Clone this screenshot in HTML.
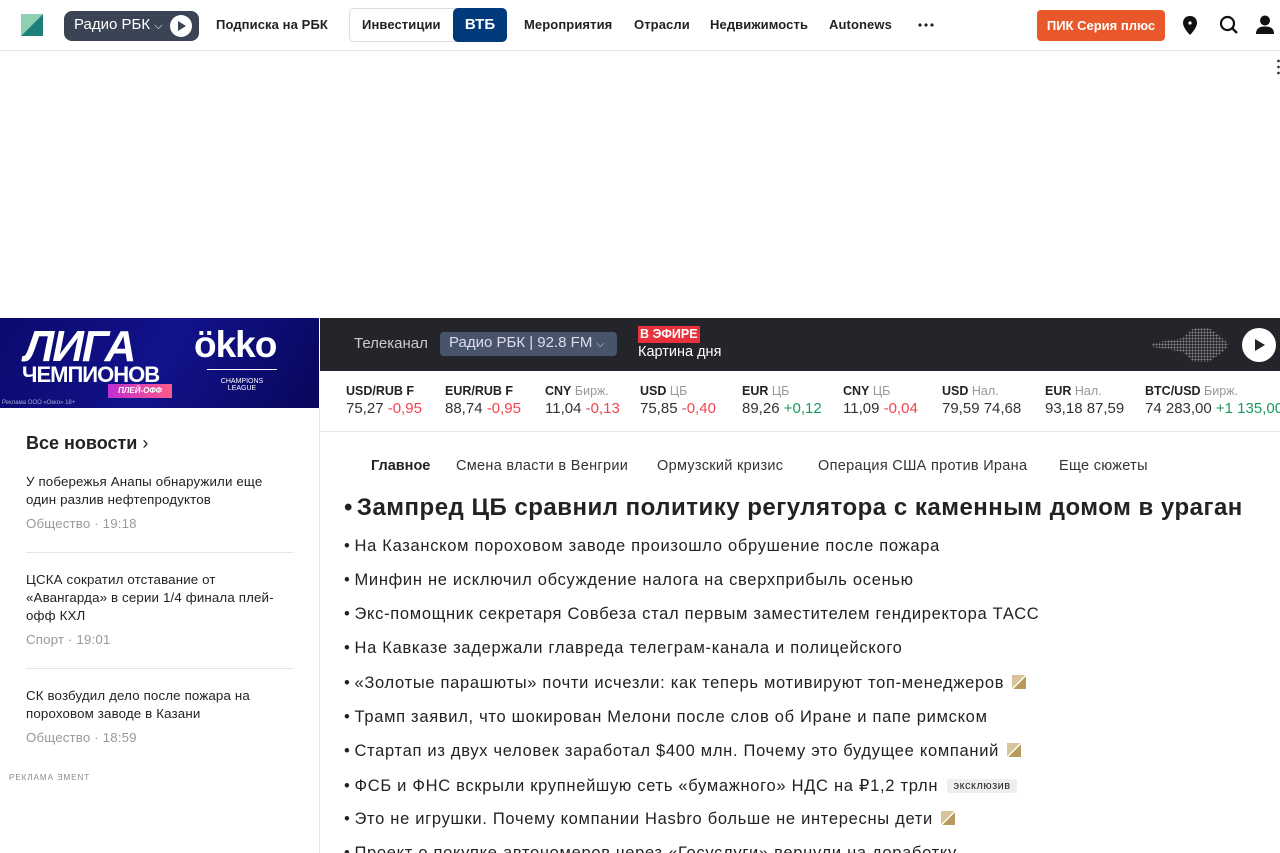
<!DOCTYPE html>
<html style="overflow:hidden;height:853px"><head><meta charset="utf-8"><style>
*{margin:0;padding:0;box-sizing:border-box}
body{width:1280px;height:853px;overflow:hidden;background:#fff;font-family:"Liberation Sans","Noto Sans CJK SC",sans-serif;color:#222;position:relative}
.abs{position:absolute}
.nav a{position:absolute;top:17px;font-size:13px;font-weight:bold;color:#222;white-space:nowrap;letter-spacing:.1px}
.tk{position:absolute;top:383px;font-size:12.5px;line-height:17px;white-space:nowrap}
.tk b{color:#222}.tk span.g{color:#999}
.tk .v{font-size:15px;color:#333}
.r{color:#f0444f}.gr{color:#1a9a5c}
.news{position:absolute;left:26px;width:262px;font-size:13.3px;line-height:18px;color:#222;letter-spacing:.15px}
.news .m{color:#999;margin-top:6px}
.ln{position:absolute;left:344px;font-size:16.5px;color:#222;white-space:nowrap;letter-spacing:.7px}
.ln:before{content:"•";margin-right:4px}
.pb{display:inline-block;width:14px;height:14px;background:linear-gradient(135deg,#d8c49a 48%,#fff 48%,#fff 54%,#b89a5e 54%);vertical-align:-1px;margin-left:8px}
.tabs span{position:absolute;top:458px;font-size:14.5px;color:#333;white-space:nowrap;letter-spacing:.3px}
</style></head><body>
<svg class="abs" style="left:21px;top:14px" width="22" height="22"><polygon points="0,0 22,0 0,22" fill="#8fd0b4"/><polygon points="22,0 22,22 0,22" fill="#1f7f7a"/></svg>
<div class="abs" style="left:64px;top:11px;width:135px;height:30px;background:#3b4454;border-radius:8px;color:#fff;font-size:15px;padding:5px 0 0 10px">Радио РБК <span style="font-size:11px">⌵</span>
<div class="abs" style="left:106px;top:4px;width:22px;height:22px;border-radius:50%;background:#fff"><div class="abs" style="left:8px;top:6px;border-left:8px solid #3b4454;border-top:5px solid transparent;border-bottom:5px solid transparent"></div></div></div>
<div class="nav">
<a style="left:216px">Подписка на РБК</a>
<div class="abs" style="left:349px;top:8px;width:158px;height:34px;border:1px solid #ddd;border-radius:5px"></div>
<a style="left:362px">Инвестиции</a>
<div class="abs" style="left:453px;top:8px;width:54px;height:34px;background:#013a7a;border-radius:5px;color:#fff;font-weight:bold;font-size:15px;text-align:center;line-height:34px">ВТБ</div>
<a style="left:524px">Мероприятия</a><a style="left:634px">Отрасли</a><a style="left:710px">Недвижимость</a><a style="left:829px">Autonews</a>
</div>
<div class="abs" style="left:917px;top:23px;width:18px;height:4px;background:radial-gradient(circle,#222 1.5px,transparent 1.8px) 0 0/6px 4px"></div>
<div class="abs" style="left:1037px;top:10px;width:128px;height:31px;background:#e8582a;border-radius:4px;color:#fff;font-size:13px;font-weight:bold;text-align:center;line-height:31px">ПИК Серия плюс</div>
<svg class="abs" style="left:1182px;top:16px" width="16" height="20"><path d="M8 0C3.6 0 1 3 1 7c0 5 7 12 7 12s7-7 7-12c0-4-2.6-7-7-7z" fill="#111"/><circle cx="8" cy="7" r="1.6" fill="#fff"/></svg>
<svg class="abs" style="left:1219px;top:15px" width="20" height="20"><circle cx="8.5" cy="8.5" r="6.5" fill="none" stroke="#111" stroke-width="2.2"/><path d="M13 13l5 5" stroke="#111" stroke-width="2.4"/></svg>
<svg class="abs" style="left:1256px;top:15px" width="20" height="20"><circle cx="9" cy="5.5" r="5" fill="#111"/><path d="M0 19c0-6 4-7.5 9-7.5s9 1.5 9 7.5z" fill="#111"/></svg>
<div class="abs" style="left:0;top:50px;width:1280px;height:1px;background:#e5e5e5"></div>
<div class="abs" style="left:1277px;top:58px;width:3px;height:18px;background:radial-gradient(circle,#333 1.2px,transparent 1.5px) 0 0/3px 6px"></div>
<div class="abs" style="left:0;top:318px;width:319px;height:90px;background:linear-gradient(120deg,#0a0a6e,#12128c 50%,#07075a);overflow:hidden">
<div class="abs" style="left:24px;top:4px;color:#fff;font-weight:900;font-size:44px;font-style:italic;letter-spacing:-2px">ЛИГА</div>
<div class="abs" style="left:22px;top:44px;color:#fff;font-weight:900;font-size:22px;letter-spacing:-1px">ЧЕМПИОНОВ</div>
<div class="abs" style="left:108px;top:66px;width:64px;height:14px;background:linear-gradient(90deg,#c02fd0,#ff5a8a);color:#fff;font-size:8px;font-weight:bold;text-align:center;line-height:14px;font-style:italic">ПЛЕЙ-ОФФ</div>
<div class="abs" style="left:194px;top:6px;color:#fff;font-size:37px;font-weight:bold;letter-spacing:-1px">ökko</div>
<div class="abs" style="left:207px;top:51px;width:70px;height:1px;background:#fff"></div>
<div class="abs" style="left:210px;top:60px;color:#fff;font-size:7px;text-align:center;width:64px">CHAMPIONS<br>LEAGUE</div>
<div class="abs" style="left:2px;top:82px;color:#aac;font-size:6px">Реклама ООО «Окко» 18+</div>
</div>
<div class="abs" style="left:320px;top:318px;width:960px;height:53px;background:#23252b"></div>
<div class="abs" style="left:354px;top:335px;color:#ccc;font-size:15px">Телеканал</div>
<div class="abs" style="left:440px;top:332px;width:177px;height:24px;background:#48546a;border-radius:4px;color:#dde;font-size:15px;padding:2px 0 0 9px;white-space:nowrap">Радио РБК | 92.8 FM <span style="font-size:10px">⌵</span></div>
<div class="abs" style="left:638px;top:326px;background:#e8313a;color:#fff;font-size:12.5px;font-weight:bold;padding:0 2px;line-height:17px">В ЭФИРЕ</div>
<div class="abs" style="left:638px;top:344px;color:#fff;font-size:14.5px">Картина дня</div>
<div class="abs" style="left:1152px;top:328px;width:76px;height:34px;background:radial-gradient(circle,#888 0.9px,transparent 1.1px) 0 0/3px 3px;clip-path:polygon(0 45%,40% 30%,55% 0,75% 0,90% 25%,100% 45%,100% 55%,90% 75%,75% 100%,55% 100%,40% 70%,0 55%)"></div>
<div class="abs" style="left:1242px;top:328px;width:34px;height:34px;border-radius:50%;background:#fff"><div class="abs" style="left:13px;top:11px;border-left:10px solid #23252b;border-top:6px solid transparent;border-bottom:6px solid transparent"></div></div>
<div class="tk" style="left:346px"><b>USD/RUB F</b><br><span class="v">75,27 <span class="r">-0,95</span></span></div>
<div class="tk" style="left:445px"><b>EUR/RUB F</b><br><span class="v">88,74 <span class="r">-0,95</span></span></div>
<div class="tk" style="left:545px"><b>CNY</b> <span class="g">Бирж.</span><br><span class="v">11,04 <span class="r">-0,13</span></span></div>
<div class="tk" style="left:640px"><b>USD</b> <span class="g">ЦБ</span><br><span class="v">75,85 <span class="r">-0,40</span></span></div>
<div class="tk" style="left:742px"><b>EUR</b> <span class="g">ЦБ</span><br><span class="v">89,26 <span class="gr">+0,12</span></span></div>
<div class="tk" style="left:843px"><b>CNY</b> <span class="g">ЦБ</span><br><span class="v">11,09 <span class="r">-0,04</span></span></div>
<div class="tk" style="left:942px"><b>USD</b> <span class="g">Нал.</span><br><span class="v">79,59 74,68</span></div>
<div class="tk" style="left:1045px"><b>EUR</b> <span class="g">Нал.</span><br><span class="v">93,18 87,59</span></div>
<div class="tk" style="left:1145px"><b>BTC/USD</b> <span class="g">Бирж.</span><br><span class="v">74 283,00 <span class="gr">+1 135,00</span></span></div>
<div class="abs" style="left:320px;top:431px;width:960px;height:1px;background:#e5e5e5"></div>
<div class="abs" style="left:319px;top:408px;width:1px;height:445px;background:#e5e5e5"></div>
<div class="abs" style="left:26px;top:433px;font-size:18px;font-weight:bold;color:#222">Все новости <span style="font-weight:normal">›</span></div>
<div class="news" style="top:473px">У побережья Анапы обнаружили еще один разлив нефтепродуктов<div class="m">Общество · 19:18</div></div>
<div class="abs" style="left:26px;top:552px;width:267px;height:1px;background:#e5e5e5"></div>
<div class="news" style="top:571px">ЦСКА сократил отставание от «Авангарда» в серии 1/4 финала плей-офф КХЛ<div class="m">Спорт · 19:01</div></div>
<div class="abs" style="left:26px;top:668px;width:267px;height:1px;background:#e5e5e5"></div>
<div class="news" style="top:687px">СК возбудил дело после пожара на пороховом заводе в Казани<div class="m">Общество · 18:59</div></div>
<div class="abs" style="left:9px;top:773px;font-size:8px;color:#888;letter-spacing:1px">РЕКЛАМА ƎMENT</div>
<div class="tabs"><span style="left:371px;font-weight:bold;color:#222;letter-spacing:0">Главное</span><span style="left:456px">Смена власти в Венгрии</span><span style="left:657px">Ормузский кризис</span><span style="left:818px">Операция США против Ирана</span><span style="left:1059px">Еще сюжеты <span style="font-size:10px;color:#888">⌵</span></span></div>
<div class="ln" style="top:494px;font-size:24px;font-weight:bold;color:#222;letter-spacing:.5px">Зампред ЦБ сравнил политику регулятора с каменным домом в ураган</div>
<div class="ln" style="top:537px">На Казанском пороховом заводе произошло обрушение после пожара</div>
<div class="ln" style="top:571px">Минфин не исключил обсуждение налога на сверхприбыль осенью</div>
<div class="ln" style="top:605px">Экс-помощник секретаря Совбеза стал первым заместителем гендиректора ТАСС</div>
<div class="ln" style="top:639px">На Кавказе задержали главреда телеграм-канала и полицейского</div>
<div class="ln" style="top:674px">«Золотые парашюты» почти исчезли: как теперь мотивируют топ-менеджеров<span class="pb"></span></div>
<div class="ln" style="top:708px">Трамп заявил, что шокирован Мелони после слов об Иране и папе римском</div>
<div class="ln" style="top:742px">Стартап из двух человек заработал $400 млн. Почему это будущее компаний<span class="pb"></span></div>
<div class="ln" style="top:776px">ФСБ и ФНС вскрыли крупнейшую сеть «бумажного» НДС на ₽1,2 трлн <span style="display:inline-block;background:#eee;border-radius:3px;font-size:11px;padding:1px 6px;margin-left:4px;vertical-align:2px;letter-spacing:.5px">эксклюзив</span></div>
<div class="ln" style="top:810px">Это не игрушки. Почему компании Hasbro больше не интересны дети<span class="pb"></span></div>
<div class="ln" style="top:844px">Проект о покупке автономеров через «Госуслуги» вернули на доработку</div>
</body></html>
